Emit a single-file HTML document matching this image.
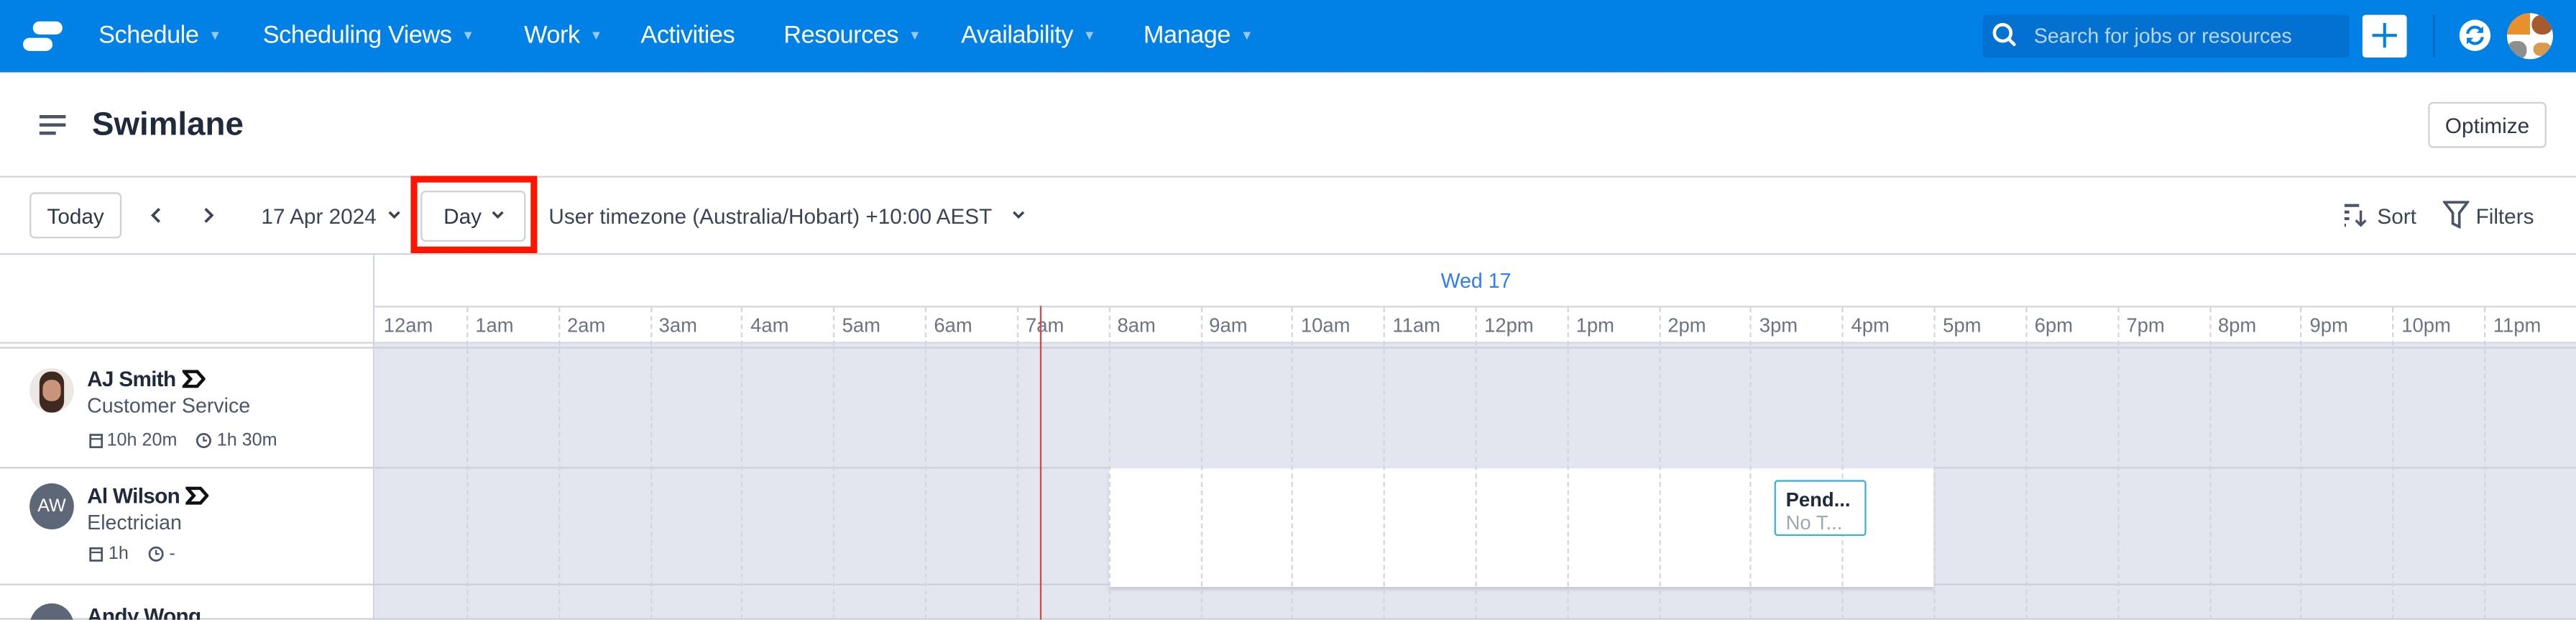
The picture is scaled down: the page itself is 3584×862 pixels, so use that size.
<!DOCTYPE html>
<html><head><meta charset="utf-8"><style>
*{box-sizing:border-box;margin:0;padding:0}
html,body{width:3584px;height:862px;overflow:hidden;background:#fff}
#s{width:1568px;height:377px;transform:scale(2.285714);transform-origin:0 0;position:relative;font-family:"Liberation Sans",sans-serif;color:#1f2a3d}
.a{position:absolute}
.nav{left:0;top:0;width:1568px;height:44px;background:#0180e5}
.mi{top:13px;font-size:15px;color:#fff;white-space:nowrap;letter-spacing:-0.2px}
.mi i{font-style:normal;font-size:8px;color:#9cc8f5;margin-left:6px;vertical-align:2px}
.btn{border:1px solid #cdd1d9;border-radius:3px;background:#fff;font-size:13px;color:#2d3748;display:flex;align-items:center;justify-content:center}
.t13{font-size:13px;color:#3a4455;white-space:nowrap}
.hr{height:1px;background:#d3d6dc;left:0;width:1568px}
.hl{top:191px;font-size:12px;color:#6b7384}
.vl{border-left:1px dashed #d2d6e0;width:0}
.sm{font-size:11px;color:#4a5568;white-space:nowrap}
.nm{font-size:13px;font-weight:bold;color:#1f2a3d;letter-spacing:-0.3px}
</style></head><body><div id="s">
<div class="a nav"></div>
<div class="a" style="left:20px;top:13px;width:18px;height:7.5px;border-radius:4px;background:#fff"></div>
<div class="a" style="left:14px;top:23px;width:18px;height:7.5px;border-radius:4px;background:#fff"></div>
<div class="a mi" style="left:60px">Schedule<i>▼</i></div>
<div class="a mi" style="left:160px">Scheduling Views<i>▼</i></div>
<div class="a mi" style="left:319px">Work<i>▼</i></div>
<div class="a mi" style="left:390px">Activities</div>
<div class="a mi" style="left:477px">Resources<i>▼</i></div>
<div class="a mi" style="left:585px">Availability<i>▼</i></div>
<div class="a mi" style="left:696px">Manage<i>▼</i></div>
<div class="a" style="left:1207px;top:9px;width:223px;height:26px;background:#0271d1;border-radius:2px"></div>
<svg class="a" style="left:1212px;top:13px" width="16" height="16" viewBox="0 0 16 16"><circle cx="7" cy="7" r="5" fill="none" stroke="#fff" stroke-width="2"/><path d="M10.5 10.5L14 14" stroke="#fff" stroke-width="2" stroke-linecap="round"/></svg>
<div class="a" style="left:1238px;top:15px;font-size:12.5px;color:#b9d6f3">Search for jobs or resources</div>
<div class="a" style="left:1438px;top:9px;width:27px;height:26px;background:#fff;border-radius:2px"></div>
<svg class="a" style="left:1443px;top:13px" width="17" height="17"><path d="M8.5 1v15M1 8.5h15" stroke="#0180e5" stroke-width="1.8"/></svg>
<div class="a" style="left:1481px;top:9px;width:1px;height:26px;background:#0265bf"></div>
<div class="a" style="left:1497px;top:12px;width:19px;height:19px;border-radius:50%;background:#fff"></div>
<svg class="a" style="left:1499px;top:14px" width="15" height="15" viewBox="0 0 15 15"><path d="M3 6.5A4.5 4.5 0 0 1 11.5 5M12 8.5A4.5 4.5 0 0 1 3.5 10" fill="none" stroke="#0180e5" stroke-width="1.8"/><path d="M12.5 2v4h-4zM2.5 13V9h4z" fill="#0180e5"/></svg>
<div class="a" style="left:1526px;top:8px;width:28px;height:28px;border-radius:50%;overflow:hidden;background:#fff">
<div class="a" style="left:0;top:0;width:14px;height:13px;background:#e8902e"></div><div class="a" style="left:15px;top:1px;width:13px;height:12px;background:#a75a2e;border-radius:6px"></div><div class="a" style="left:0;top:17px;width:12px;height:11px;background:#8e8e8e;border-radius:5px"></div><div class="a" style="left:16px;top:18px;width:11px;height:8px;background:#d99a4e;border-radius:4px"></div></div>

<div class="a" style="left:24px;top:70px;width:16px;height:2px;background:#4a5568"></div>
<div class="a" style="left:24px;top:75px;width:16px;height:2px;background:#4a5568"></div>
<div class="a" style="left:24px;top:80px;width:10px;height:2px;background:#4a5568"></div>
<div class="a" style="left:56px;top:65px;font-size:20px;font-weight:bold;color:#1f2a3d">Swimlane</div>
<div class="a btn" style="left:1478px;top:62px;width:72px;height:28px">Optimize</div>
<div class="a hr" style="top:107px"></div>

<div class="a btn" style="left:18px;top:117px;width:56px;height:28px">Today</div>
<svg class="a" style="left:91px;top:126px" width="8" height="10"><path d="M6 1L2 5l4 4" fill="none" stroke="#3a4455" stroke-width="1.6"/></svg>
<svg class="a" style="left:123px;top:126px" width="8" height="10"><path d="M2 1l4 4-4 4" fill="none" stroke="#3a4455" stroke-width="1.6"/></svg>
<div class="a t13" style="left:159px;top:124px">17 Apr 2024</div>
<svg class="a" style="left:236px;top:128px" width="8" height="6"><path d="M1 1l3 3 3-3" fill="none" stroke="#3a4455" stroke-width="1.5"/></svg>
<div class="a" style="left:250px;top:107px;width:77px;height:47px;border:4px solid #fe1500"></div>
<div class="a btn" style="left:256px;top:116px;width:64px;height:31px;justify-content:flex-start;padding-left:13px">Day</div>
<svg class="a" style="left:299px;top:128px" width="8" height="6"><path d="M1 1l3 3 3-3" fill="none" stroke="#3a4455" stroke-width="1.5"/></svg>
<div class="a t13" style="left:334px;top:124px">User timezone (Australia/Hobart) +10:00 AEST</div>
<svg class="a" style="left:616px;top:128px" width="8" height="6"><path d="M1 1l3 3 3-3" fill="none" stroke="#3a4455" stroke-width="1.5"/></svg>
<svg class="a" style="left:1427px;top:124px" width="16" height="14"><path d="M0 1h9M0 5h3M0 9h3M0 13h1" stroke="#4a5568" stroke-width="1.8"/><path d="M10 4v9M7 10l3 3 3-3" stroke="#4a5568" stroke-width="1.5" fill="none"/></svg>
<div class="a t13" style="left:1447px;top:124px">Sort</div>
<svg class="a" style="left:1487px;top:122px" width="16" height="17"><path d="M1 1h14l-5 6.5v8.5l-4-2v-6.5z" fill="none" stroke="#4a5568" stroke-width="1.6"/></svg>
<div class="a t13" style="left:1507px;top:124px">Filters</div>
<div class="a hr" style="top:154px"></div>

<div class="a" style="left:227px;top:154px;width:1px;height:223px;background:#d3d6dc"></div>
<div class="a" style="left:877px;top:164px;font-size:12.5px;color:#2e7cf6">Wed 17</div>
<div class="a" style="left:228px;top:186px;width:1340px;height:1px;background:#d3d6dc"></div>
<div class="a" style="left:0;top:208px;width:1568px;height:1px;background:#d3d6dc"></div>
<div class="a" style="left:228px;top:209px;width:1340px;height:168px;background:#e3e6ee"></div>
<div class="a" style="left:0;top:211px;width:1568px;height:1px;background:#cdd0d8"></div>
<div class="a" style="left:675px;top:285px;width:502px;height:72px;background:#fff;box-shadow:0 2px 2px rgba(0,0,0,.12)"></div>
<div class="a" style="left:0;top:284px;width:675px;height:1px;background:#cdd0d8"></div>
<div class="a" style="left:1177px;top:284px;width:391px;height:1px;background:#cdd0d8"></div>
<div class="a" style="left:0;top:355px;width:675px;height:1px;background:#cdd0d8"></div>
<div class="a" style="left:1177px;top:355px;width:391px;height:1px;background:#cdd0d8"></div>
<div class="a" style="left:0;top:376px;width:1568px;height:1px;background:#cdd0d8"></div>

<div id="g"></div>
<script>
var L=["12am","1am","2am","3am","4am","5am","6am","7am","8am","9am","10am","11am","12pm","1pm","2pm","3pm","4pm","5pm","6pm","7pm","8pm","9pm","10pm","11pm"],h="";
for(var i=0;i<24;i++){var x=228+i*55.83;
if(i>0)h+='<div class="a vl" style="left:'+x.toFixed(1)+'px;top:187px;height:190px"></div>';
h+='<div class="a hl" style="left:'+(x+5.5).toFixed(1)+'px">'+L[i]+'</div>';}
document.getElementById('g').innerHTML=h;
</script>
<div class="a" style="left:633px;top:186px;width:1px;height:191px;background:#d94848"></div>

<div class="a" style="left:1080px;top:292px;width:56px;height:34px;border:1.5px solid #3eb0d3;border-radius:2px;background:#fff"></div>
<div class="a" style="left:1087px;top:297px;font-size:12px;font-weight:bold;color:#1f2a3d">Pend...</div>
<div class="a" style="left:1087px;top:311px;font-size:12px;color:#a0a6b2">No T...</div>

<div class="a" style="left:18px;top:224px;width:27px;height:27px;border-radius:50%;background:#ece8e4;overflow:hidden"><div class="a" style="left:6px;top:2px;width:15px;height:25px;border-radius:7px;background:#3f2a20"></div><div class="a" style="left:8px;top:7px;width:11px;height:13px;border-radius:5px;background:#c99478"></div></div>
<div class="a nm" style="left:53px;top:223px">AJ Smith</div>
<svg class="a" style="left:111px;top:225px" width="14" height="11"><path d="M1 1h8l4 4.5-4 4.5H1l4-4.5z" fill="none" stroke="#111" stroke-width="2"/></svg>
<div class="a" style="left:53px;top:240px;font-size:12.5px;color:#4a5568">Customer Service</div>
<svg class="a" style="left:54px;top:263px" width="9" height="10"><rect x="1" y="1.5" width="7" height="7.5" fill="none" stroke="#4a5568" stroke-width="1.2"/><path d="M1 4h7" stroke="#4a5568"/></svg>
<div class="a sm" style="left:65px;top:262px">10h 20m</div>
<svg class="a" style="left:119px;top:263px" width="10" height="10"><circle cx="5" cy="5" r="4" fill="none" stroke="#4a5568" stroke-width="1.2"/><path d="M5 2.5V5h2" fill="none" stroke="#4a5568"/></svg>
<div class="a sm" style="left:132px;top:262px">1h 30m</div>
<div class="a" style="left:18px;top:294px;width:27px;height:28px;border-radius:50%;background:#5e6778;color:#fff;font-size:11px;display:flex;align-items:center;justify-content:center">AW</div>
<div class="a nm" style="left:53px;top:294px">Al Wilson</div>
<svg class="a" style="left:113px;top:296px" width="14" height="11"><path d="M1 1h8l4 4.5-4 4.5H1l4-4.5z" fill="none" stroke="#111" stroke-width="2"/></svg>
<div class="a" style="left:53px;top:311px;font-size:12.5px;color:#4a5568">Electrician</div>
<svg class="a" style="left:54px;top:332px" width="9" height="10"><rect x="1" y="1.5" width="7" height="7.5" fill="none" stroke="#4a5568" stroke-width="1.2"/><path d="M1 4h7" stroke="#4a5568"/></svg>
<div class="a sm" style="left:66px;top:331px">1h</div>
<svg class="a" style="left:90px;top:332px" width="10" height="10"><circle cx="5" cy="5" r="4" fill="none" stroke="#4a5568" stroke-width="1.2"/><path d="M5 2.5V5h2" fill="none" stroke="#4a5568"/></svg>
<div class="a sm" style="left:103px;top:331px">-</div>
<div class="a" style="left:18px;top:367px;width:27px;height:28px;border-radius:50%;background:#5e6778"></div>
<div class="a nm" style="left:53px;top:367px">Andy Wong</div>
<div class="a" style="left:0;top:377px;width:1568px;height:10px;background:#fff"></div>
</div></body></html>
